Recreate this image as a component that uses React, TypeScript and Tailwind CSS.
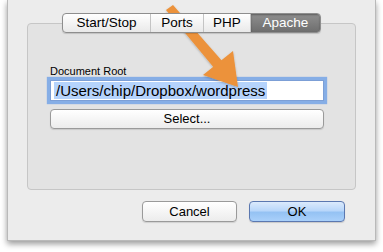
import React from "react";

const tabs = [
  { label: "Start/Stop", w: "w-[88px]" },
  { label: "Ports", w: "w-[53px]" },
  { label: "PHP", w: "w-[47px]" },
];

const Arrow: React.FC = () => (
  <svg
    className="absolute left-0 top-0 pointer-events-none"
    width="383"
    height="252"
    viewBox="0 0 383 252"
  >
    <defs>
      <filter id="sh" x="-20%" y="-20%" width="140%" height="140%">
        <feDropShadow dx="0" dy="1" stdDeviation="1" floodColor="#000" floodOpacity="0.25" />
      </filter>
    </defs>
    <g filter="url(#sh)" fill="#ec923a">
      <polygon points="166,10 173,5 223,62 215,69" />
      <polygon points="203,75 233,51 238,87" />
    </g>
  </svg>
);

const App: React.FC = () => {
  return (
    <div
      className="relative w-[383px] h-[252px] bg-white overflow-hidden"
      style={{ fontFamily: '"Liberation Sans", Arial, sans-serif' }}
    >
      <div className="ml-[7px] w-[369px] h-[241px] bg-[#ececec] border-x border-b border-[#b9b9b9] shadow-[0_3px_6px_rgba(0,0,0,0.4)] pt-[13px] px-[19px]">
        {/* segmented tabs */}
        <div className="relative z-10 mx-auto flex w-[259px] h-[20px] rounded-[4px] border border-[#8e8e8e] overflow-hidden bg-gradient-to-b from-[#ffffff] to-[#e9e9e9] shadow-[0_1px_1px_rgba(0,0,0,0.15)] text-[13.5px] text-black">
          {tabs.map((t) => (
            <div
              key={t.label}
              className={`${t.w} flex items-center justify-center border-r border-[#c4c4c4] leading-none`}
            >
              {t.label}
            </div>
          ))}
          <div className="flex-1 flex items-center justify-center bg-gradient-to-b from-[#8f8f8f] to-[#6e6e6e] text-white leading-none shadow-[inset_0_1px_2px_rgba(0,0,0,0.35)]">
            Apache
          </div>
        </div>

        {/* group box */}
        <div className="-mt-[10px] h-[167px] rounded-[4px] border border-[#c6c6c6] bg-[#e3e3e3] pl-[22px] pr-[31px] pt-[41px]">
          <div className="text-[11px] leading-[13px] text-black">Document Root</div>
          <div className="mt-[2px] h-[21px] bg-white border border-[#7c9fd6] shadow-[0_0_1px_3px_#86aee6] flex items-center px-[3px]">
            <span className="bg-[#b5d3fc] text-[15px] leading-[17px] px-[2px] text-black">
              /Users/chip/Dropbox/wordpress
            </span>
          </div>
          <div className="mt-[8px] h-[20px] rounded-[4px] border border-[#9a9a9a] bg-gradient-to-b from-[#ffffff] to-[#ececec] shadow-[0_1px_1px_rgba(0,0,0,0.12)] flex items-center justify-center text-[13px] text-black">
            Select...
          </div>
        </div>

        {/* bottom buttons */}
        <div className="mt-[11px] flex justify-end gap-[12px] pr-[11px]">
          <div className="w-[95px] h-[21px] rounded-[4px] border border-[#9a9a9a] bg-gradient-to-b from-[#ffffff] to-[#ececec] shadow-[0_1px_1px_rgba(0,0,0,0.12)] flex items-center justify-center text-[13px] text-black">
            Cancel
          </div>
          <div className="w-[96px] h-[21px] rounded-[4px] border border-[#5b78b0] bg-[linear-gradient(to_bottom,#dbeafc_0%,#b9d7fa_45%,#95c2f3_55%,#a9d0fa_100%)] shadow-[0_1px_1px_rgba(0,0,0,0.15)] flex items-center justify-center text-[13px] text-black">
            OK
          </div>
        </div>
      </div>
      <Arrow />
    </div>
  );
};

export default App;
